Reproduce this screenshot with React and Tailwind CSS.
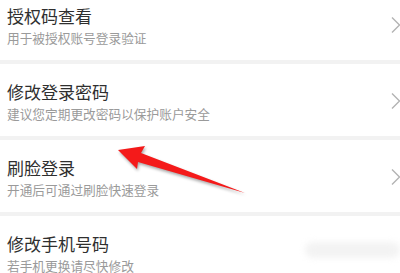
import React from "react";

const rows = [
  { title: "授权码查看", desc: "用于被授权账号登录验证", chevron: true },
  { title: "修改登录密码", desc: "建议您定期更改密码以保护账户安全", chevron: true },
  { title: "刷脸登录", desc: "开通后可通过刷脸快速登录", chevron: true },
  { title: "修改手机号码", desc: "若手机更换请尽快修改", chevron: false },
];

const Chevron = () => (
  <svg width="12" height="18" viewBox="0 0 12 18" className="shrink-0">
    <path d="M2 1.5 L9.5 9 L2 16.5" fill="none" stroke="#b3b3b3" strokeWidth="1.4" />
  </svg>
);

export default function App() {
  return (
    <div
      className="relative w-[400px] h-[273px] overflow-hidden bg-white"
      style={{ fontFamily: '"Noto Sans CJK SC", "Noto Sans", sans-serif' }}
    >
      <div className="-mt-[12px] flex flex-col">
        {rows.map((row, i) => (
          <div key={i} className="flex flex-col">
            <div className="h-[72px] flex items-center justify-between pl-[7px] pr-[2px]">
              <div className="flex flex-col pt-[2px]">
                <span className="text-[17px] leading-[22px] text-[#2f2f2f]">{row.title}</span>
                <span className="mt-[3px] text-[12.7px] leading-[16px] text-[#9a9a9a]">{row.desc}</span>
              </div>
              {row.chevron && (
                <div className="-mr-[4px] mt-[2px]">
                  <Chevron />
                </div>
              )}
            </div>
            <div className="h-[4px] bg-[#f2f2f2]" />
          </div>
        ))}
      </div>

      {/* blurred spot where a watermark was */}
      <div className="absolute left-[305px] top-[242px] w-[95px] h-[16px] rounded-full bg-[#f3f3f3] blur-[3px]" />

      {/* red annotation arrow */}
      <svg
        className="absolute left-0 top-0"
        width="400"
        height="273"
        viewBox="0 0 400 273"
        style={{ filter: "drop-shadow(1px 2px 1.5px rgba(0,0,0,0.35))" }}
      >
        <polygon
          points="118,150 145,146 141,153 245,193 138,162 137,169"
          fill="#f41a1a"
        />
      </svg>
    </div>
  );
}
